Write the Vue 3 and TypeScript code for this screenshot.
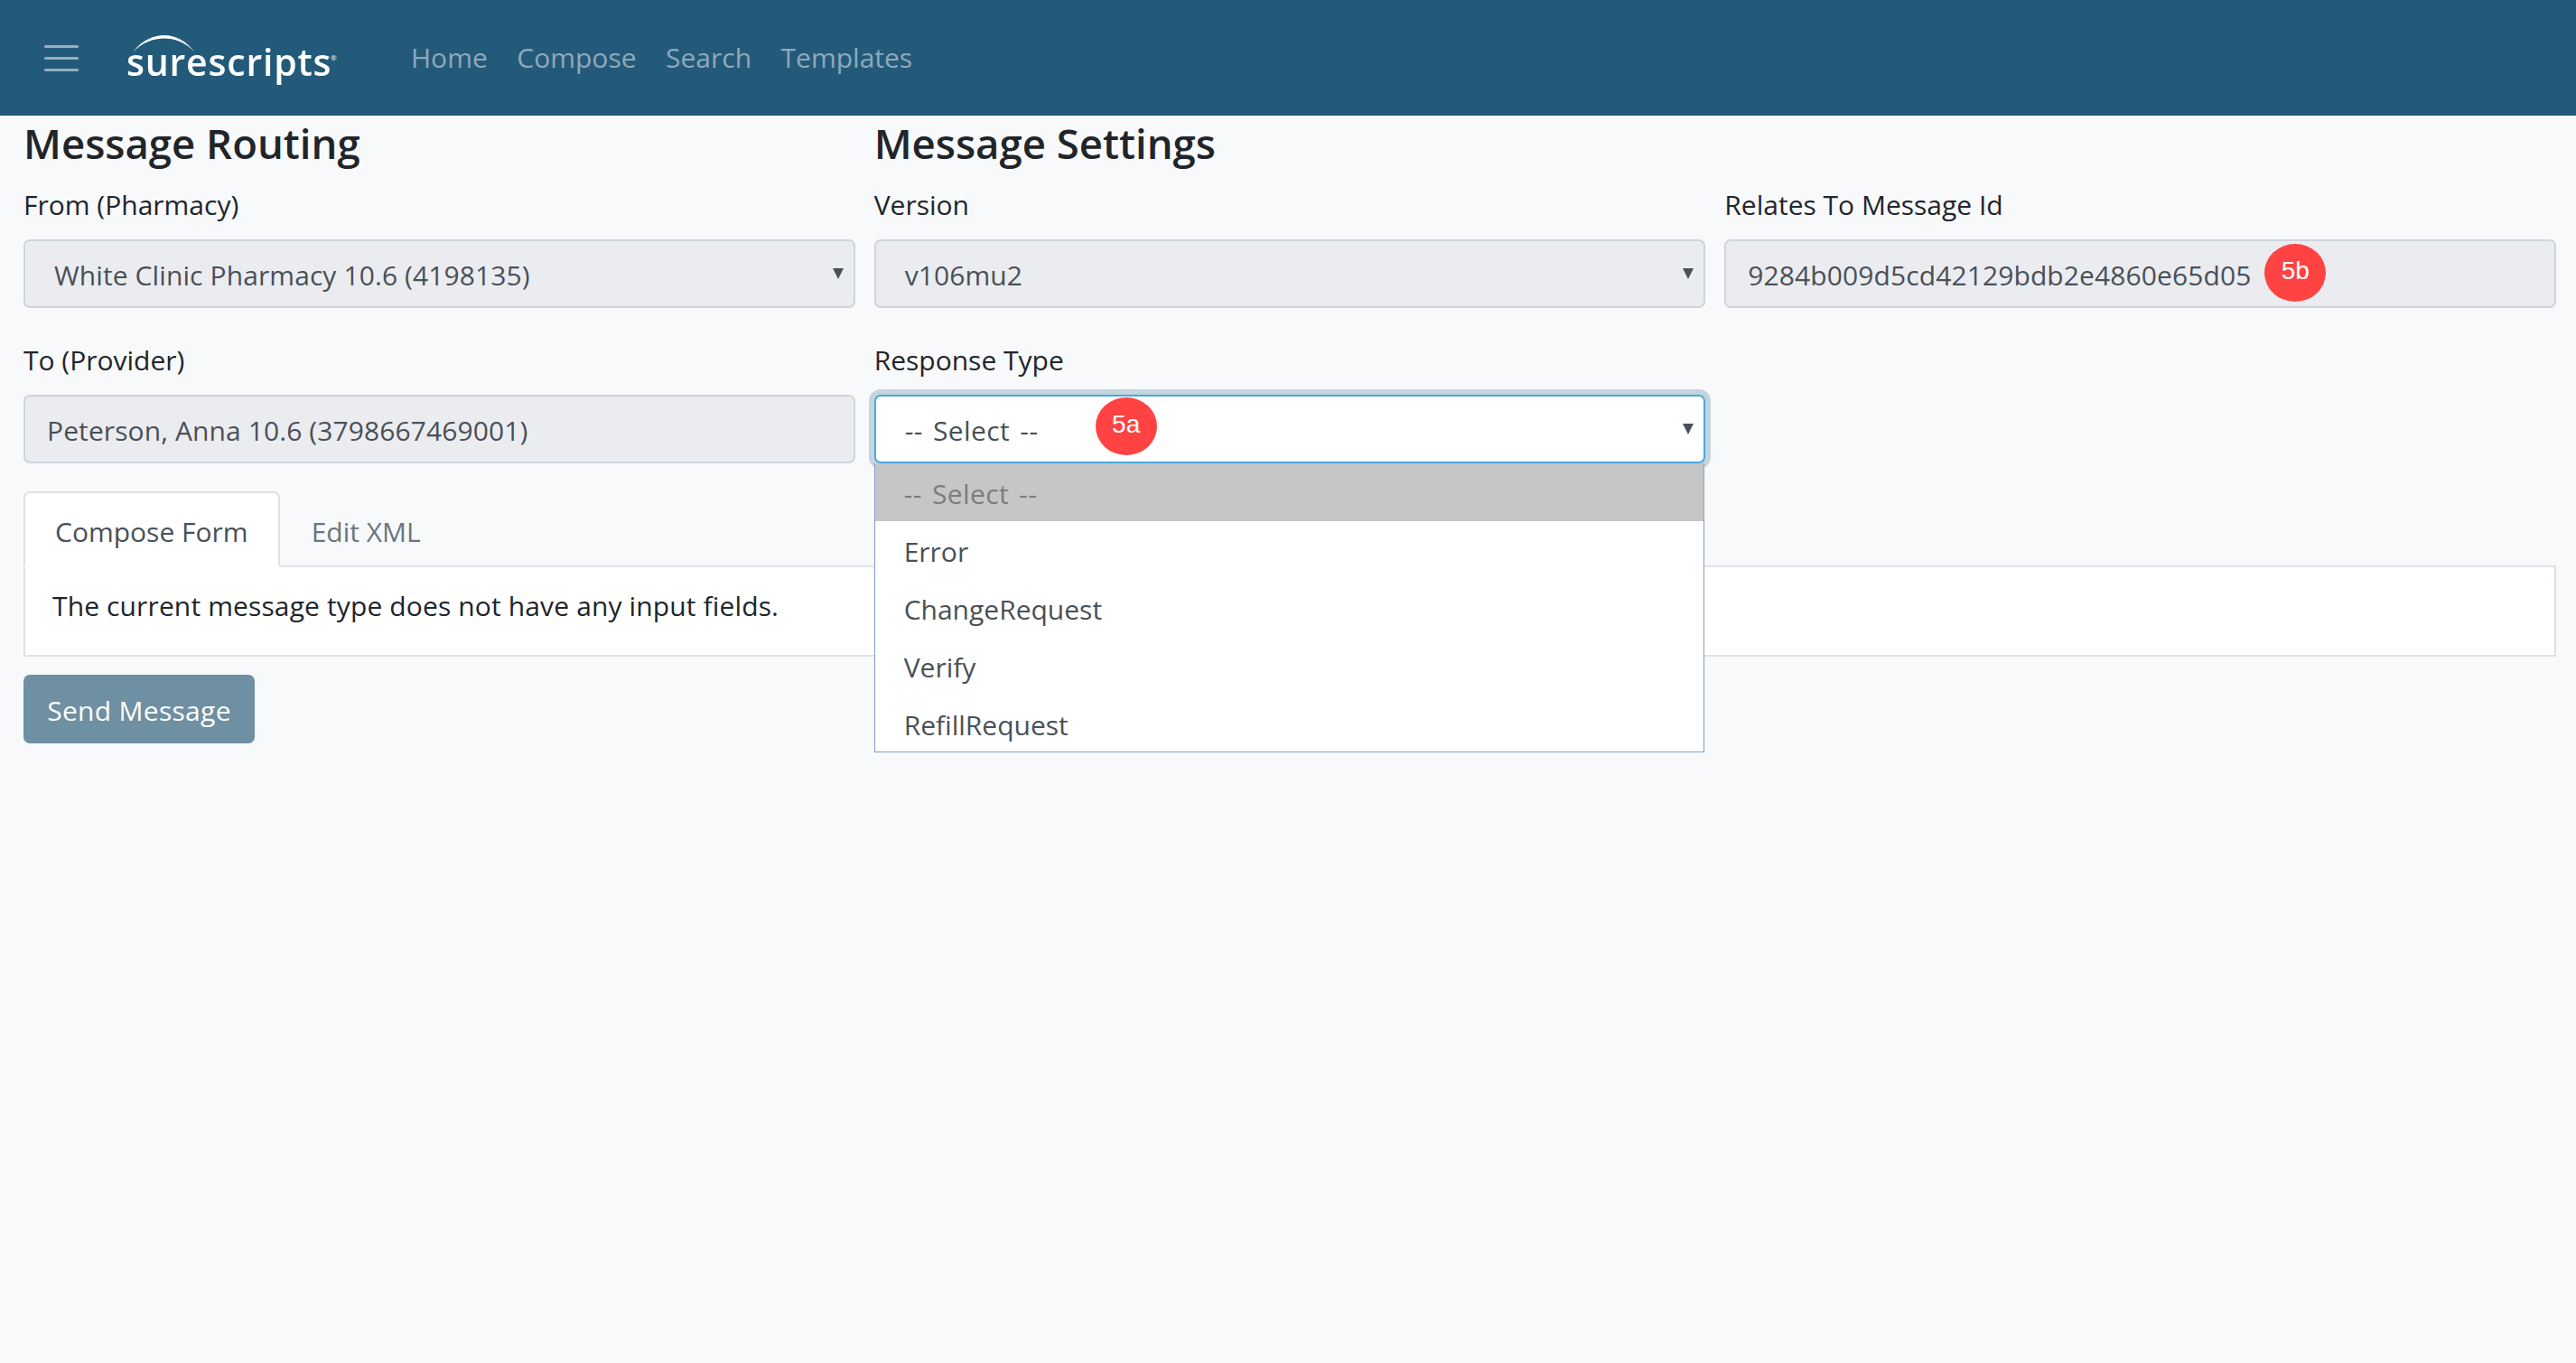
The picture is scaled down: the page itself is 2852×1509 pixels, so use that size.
<script setup lang="ts">
const navLinks = ['Home', 'Compose', 'Search', 'Templates'];
const responseTypes = ['-- Select --', 'Error', 'ChangeRequest', 'Verify', 'RefillRequest'];
</script>

<template>
  <div class="page">
    <header class="navbar">
      <button class="menu-btn" aria-label="Menu">
        <span></span><span></span><span></span>
      </button>
      <div class="logo">
        <svg class="logo-arc" width="72" height="22" viewBox="0 0 82 24" preserveAspectRatio="none">
          <path d="M2 22C14 6 30 1 42 1c14 0 28 7 38 20C68 9 54 5 42 5 28 5 14 10 2 22Z" fill="#fff" />
        </svg>
        <span class="logo-text">surescripts</span>
        <span class="logo-mark">®</span>
      </div>
      <nav class="nav-links">
        <a v-for="link in navLinks" :key="link">{{ link }}</a>
      </nav>
    </header>

    <main class="content">
      <div class="form-grid">
        <section class="col">
          <h4>Message Routing</h4>
          <div class="group">
            <label>From (Pharmacy)</label>
            <div class="control select disabled">
              <span>White Clinic Pharmacy 10.6 (4198135)</span>
              <svg class="caret" width="12" height="12" viewBox="0 0 12 12"><path d="M0 0h12L6 12Z" /></svg>
            </div>
          </div>
          <div class="group">
            <label>To (Provider)</label>
            <div class="control disabled">Peterson, Anna 10.6 (3798667469001)</div>
          </div>
        </section>

        <section class="col">
          <h4>Message Settings</h4>
          <div class="group">
            <label>Version</label>
            <div class="control select disabled">
              <span>v106mu2</span>
              <svg class="caret" width="12" height="12" viewBox="0 0 12 12"><path d="M0 0h12L6 12Z" /></svg>
            </div>
          </div>
          <div class="group dropdown-wrap">
            <label>Response Type</label>
            <div class="control select focused">
              <span class="placeholder">-- Select --</span>
              <span class="badge badge-a">5a</span>
              <svg class="caret" width="12" height="12" viewBox="0 0 12 12"><path d="M0 0h12L6 12Z" /></svg>
            </div>
            <ul class="dropdown">
              <li v-for="(opt, i) in responseTypes" :key="opt" :class="{ current: i === 0 }">{{ opt }}</li>
            </ul>
          </div>
        </section>

        <section class="col col-third">
          <div class="group">
            <label>Relates To Message Id</label>
            <div class="control disabled message-id">
              <span>9284b009d5cd42129bdb2e4860e65d05</span>
              <span class="badge badge-b">5b</span>
            </div>
          </div>
        </section>
      </div>

      <div class="tabs">
        <a class="tab active">Compose Form</a>
        <a class="tab">Edit XML</a>
      </div>
      <div class="tab-panel">The current message type does not have any input fields.</div>

      <button class="send-btn">Send Message</button>
    </main>
  </div>
</template>

<style scoped>
.page {
  min-height: 1509px;
  background: #f8f9fb;
  color: #212529;
  font-family: 'Open Sans', 'Noto Sans', sans-serif;
  font-size: 30px;
  line-height: 44px;
}

.navbar {
  display: flex;
  align-items: center;
  height: 128px;
  padding-left: 49px;
  background: #235a7a;
}

.menu-btn {
  display: flex;
  flex-direction: column;
  gap: 10px;
  width: 38px;
  padding: 0;
  border: 0;
  background: none;
}

.menu-btn span {
  height: 3px;
  border-radius: 2px;
  background: #97afbf;
}

.logo {
  position: relative;
  display: flex;
  width: 315px;
  margin-left: 53px;
  padding-top: 8px;
  color: #fff;
}

.logo-arc {
  position: absolute;
  top: 3px;
  left: 5px;
}

.logo-text {
  font-size: 41px;
  font-weight: 600;
  line-height: 50px;
  letter-spacing: 0.8px;
  filter: blur(0.4px);
}

.logo-mark {
  position: absolute;
  top: 24px;
  left: 226px;
  font-size: 8px;
  line-height: 10px;
}

.nav-links {
  display: flex;
  gap: 32.5px;
}

.nav-links a {
  color: #8fa9bb;
}

.content {
  padding: 6px 22px 0 26px;
}

.form-grid {
  display: grid;
  grid-template-columns: repeat(3, 1fr);
  column-gap: 21px;
}

h4 {
  height: 52px;
  margin: 0 0 12px;
  font-size: 45.5px;
  font-weight: 600;
  line-height: 48px;
}

.col-third {
  padding-top: 64px;
}

.group {
  margin-bottom: 29px;
}

.group label {
  display: block;
  margin-bottom: 16px;
  padding-top: 7px;
}

.control {
  position: relative;
  display: flex;
  align-items: center;
  box-sizing: border-box;
  height: 76px;
  padding: 4px 0 0 24px;
  border: 2px solid #ced4da;
  border-radius: 7px;
  color: #495057;
  letter-spacing: 0.1px;
}

.disabled {
  background: #ebecf0;
}

.select {
  padding-left: 32px;
}

.placeholder {
  letter-spacing: 0.4px;
  word-spacing: 3px;
}

.caret {
  position: absolute;
  top: 30px;
  right: 11px;
  fill: #495057;
}

.focused {
  border-color: #4aa8dc;
  background: #fff;
  box-shadow: 0 0 0 6px #c3d5de;
}

.dropdown-wrap {
  position: relative;
}

.dropdown {
  position: absolute;
  top: 100%;
  left: 0;
  z-index: 2;
  box-sizing: border-box;
  width: 919px;
  height: 320px;
  margin: 0;
  padding: 2px 0 0;
  border: 1px solid #7f9fd0;
  border-top: 0;
  background: linear-gradient(#c6c6c6 64px, #fff 64px);
  color: #495057;
  list-style: none;
}

.dropdown li {
  height: 64px;
  padding-left: 32px;
  line-height: 64px;
}

.dropdown .current {
  color: #7d7d7d;
  word-spacing: 3px;
  letter-spacing: 0.4px;
}

.badge {
  position: absolute;
  z-index: 1;
  width: 68px;
  height: 64px;
  border-radius: 50%;
  background: #ff4343;
  color: #fff;
  font-family: 'Liberation Sans', sans-serif;
  font-size: 28px;
  letter-spacing: 0;
  line-height: 60px;
  text-align: center;
}

.badge-a {
  top: 1px;
  left: 243px;
}

.badge-b {
  top: 3px;
  left: 596px;
}

.tabs {
  display: flex;
  margin-top: 2px;
  border-bottom: 2px solid #dee2e6;
}

.tab {
  box-sizing: border-box;
  height: 84px;
  margin-bottom: -2px;
  padding: 4px 33px 0;
  border: 2px solid transparent;
  border-radius: 7px 7px 0 0;
  color: #6c757d;
  line-height: 78px;
}

.tab.active {
  border-color: #dee2e6 #dee2e6 #fff;
  background: #fff;
  color: #495057;
}

.tab-panel {
  box-sizing: border-box;
  height: 99px;
  padding: 21px 30px 0;
  border: 2px solid #dee2e6;
  border-top: 0;
  background: #fff;
  letter-spacing: 0.13px;
}

.send-btn {
  display: block;
  width: 256px;
  height: 76px;
  margin-top: 20px;
  padding: 4px 0 0;
  border: 0;
  border-radius: 7px;
  background: #6f8fa3;
  color: #fff;
  font: inherit;
  letter-spacing: 0.3px;
}
</style>

<style>
html,
body {
  background: #f8f9fb;
}
</style>
